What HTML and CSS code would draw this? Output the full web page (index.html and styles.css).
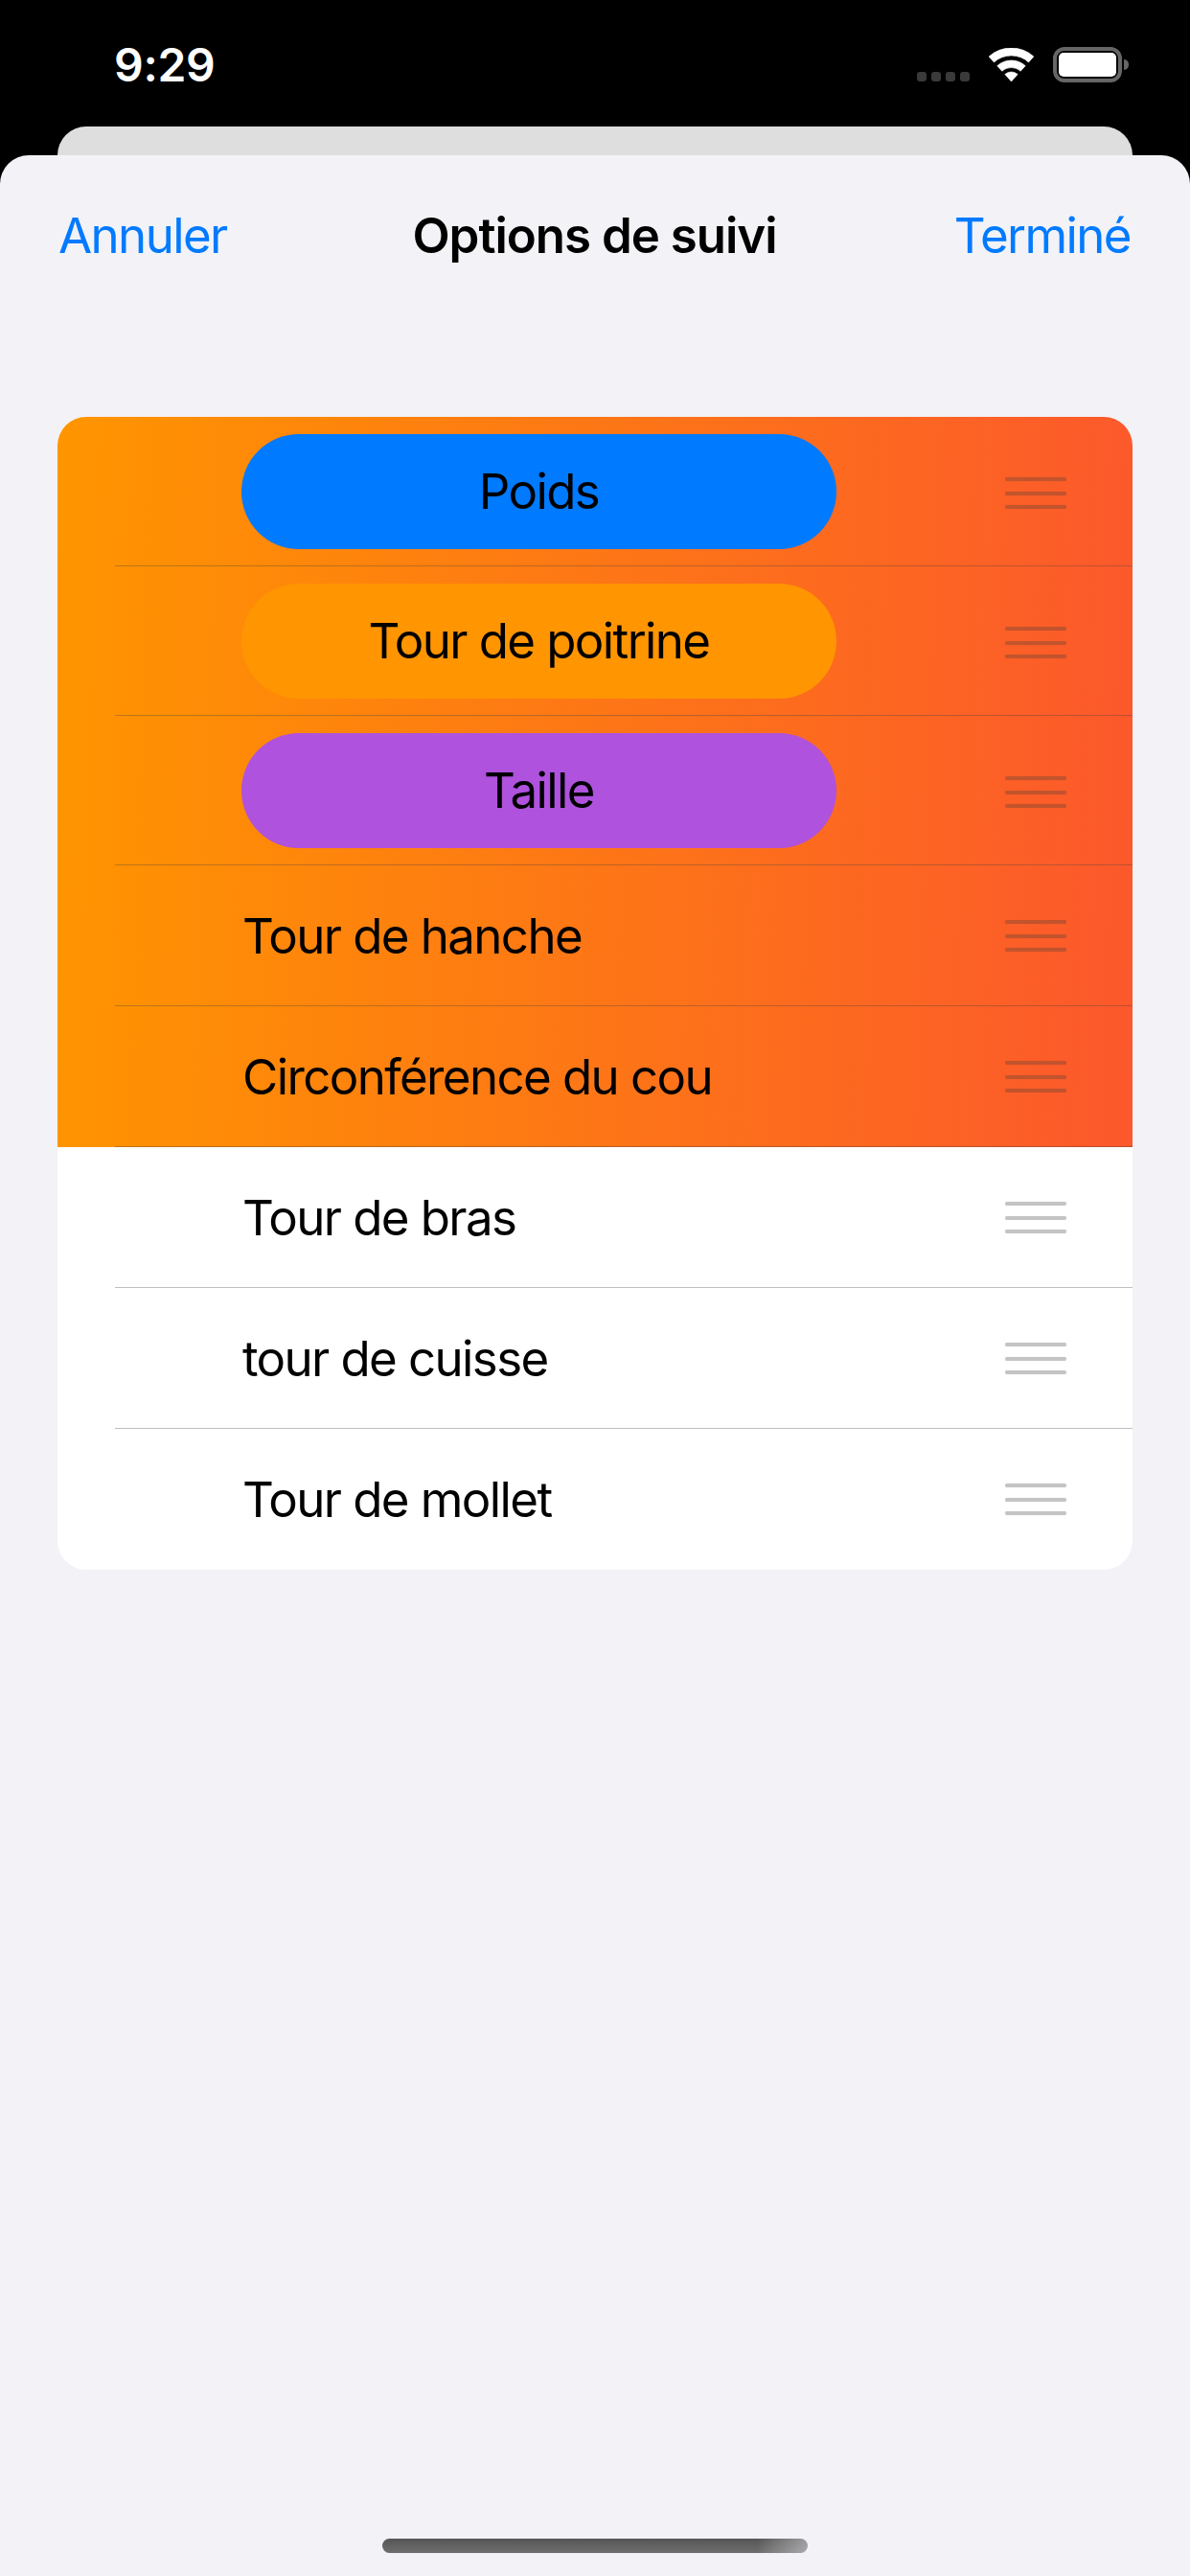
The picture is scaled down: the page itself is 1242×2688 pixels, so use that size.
FILE: index.html
```html
<!DOCTYPE html>
<html lang="fr">
<head>
<meta charset="utf-8">
<title>Options de suivi</title>
<link rel="stylesheet" href="styles.css">
</head>
<body>
<div class="status">
  <span class="time">9:29</span>
  <div class="status-right">
    <div class="cell"><i></i><i></i><i></i><i></i></div>
    <svg class="wifi" width="47" height="35" viewBox="0 0 47 35"><path d="M.1 9A35 35 0 0 1 46.900 9L41.570 14.940A27 27 0 0 0 5.430 14.940Z M8.780 18.650A22 22 0 0 1 38.220 18.650L33.200 24.220A14.500 14.500 0 0 0 13.800 24.220Z M16.810 27.570A10 10 0 0 1 30.190 27.570L23.500 35Z" fill="#fff" stroke="#fff" stroke-width=".6" stroke-linejoin="round"/></svg>
    <div class="battery"><div class="battery-body"><div class="battery-fill"></div></div><div class="battery-nub"></div></div>
  </div>
</div>
<div class="back-card"></div>
<main class="sheet">
  <header class="nav">
    <span class="nav-btn">Annuler</span>
    <h1 class="nav-title">Options de suivi</h1>
    <span class="nav-btn nav-btn-end">Terminé</span>
  </header>
  <section class="list">
    <div class="group-active">
      <div class="row row-pill"><div class="label-wrap"><span class="pill pill-blue">Poids</span></div><div class="grip"><i></i><i></i><i></i></div></div>
      <div class="row row-pill"><div class="label-wrap"><span class="pill pill-orange">Tour de poitrine</span></div><div class="grip"><i></i><i></i><i></i></div></div>
      <div class="row row-pill"><div class="label-wrap"><span class="pill pill-purple">Taille</span></div><div class="grip"><i></i><i></i><i></i></div></div>
      <div class="row"><div class="label-wrap"><span class="label">Tour de hanche</span></div><div class="grip"><i></i><i></i><i></i></div></div>
      <div class="row"><div class="label-wrap"><span class="label">Circonférence du cou</span></div><div class="grip"><i></i><i></i><i></i></div></div>
    </div>
    <div class="row"><div class="label-wrap"><span class="label">Tour de bras</span></div><div class="grip"><i></i><i></i><i></i></div></div>
    <div class="row"><div class="label-wrap"><span class="label">tour de cuisse</span></div><div class="grip"><i></i><i></i><i></i></div></div>
    <div class="row row-last"><div class="label-wrap"><span class="label">Tour de mollet</span></div><div class="grip"><i></i><i></i><i></i></div></div>
  </section>
  <div class="home"></div>
</main>
</body>
</html>
```
FILE: styles.css
```css
* { box-sizing: border-box; }
html, body { margin: 0; padding: 0; }
body {
  width: 1242px;
  height: 2688px;
  overflow: hidden;
  background: #000;
  font-family: Inter, "Liberation Sans", sans-serif;
  display: flex;
  flex-direction: column;
}
.status {
  height: 132px;
  flex: none;
  display: flex;
  justify-content: space-between;
  align-items: flex-start;
  padding: 49px 64px 0 119px;
}
.time {
  color: #fff;
  font-size: 48px;
  font-weight: 600;
  line-height: 37px;
  letter-spacing: -0.3px;
}
.status-right { display: flex; align-items: flex-start; }
.cell { display: flex; gap: 5px; margin-top: 26px; margin-right: 20px; }
.cell i { display: block; width: 10px; height: 10px; border-radius: 3px; background: #3a3a3a; }
.wifi { display: block; margin-top: 1px; margin-right: 20px; }
.battery { display: flex; align-items: center; }
.battery-body {
  width: 72px;
  height: 37px;
  border: 4px solid #666;
  border-radius: 12px;
  padding: 2px;
}
.battery-fill { width: 100%; height: 100%; background: #fff; border-radius: 5px; }
.battery-nub { width: 5px; height: 11px; margin-left: 2px; background: #666; border-radius: 0 6px 6px 0; }
.back-card {
  flex: none;
  height: 30px;
  margin: 0 60px;
  background: #dedede;
  border-radius: 30px 30px 0 0;
}
.sheet {
  flex: 1;
  display: flex;
  flex-direction: column;
  background: #f2f2f7;
  border-radius: 30px 30px 0 0;
}
.nav {
  height: 168px;
  flex: none;
  display: grid;
  grid-template-columns: 1fr auto 1fr;
  align-items: center;
  padding: 0 62px 0 61px;
}
.nav-btn { color: #007aff; font-size: 51px; line-height: 60px; letter-spacing: -1.6px; }
.nav-btn-end { text-align: right; }
.nav-title { margin: 0; font-size: 51px; line-height: 60px; font-weight: 600; color: #000; letter-spacing: -1px; }
.list {
  margin: 105px 60px 0;
  background: #fff;
  border-radius: 30px;
  overflow: hidden;
}
.group-active { background: linear-gradient(92deg, #ff9500 0%, #fc582c 100%); }
.row {
  position: relative;
  height: 147px;
  display: flex;
  align-items: center;
  justify-content: space-between;
  padding: 0 69px 0 193px;
  color: #000;
  font-size: 51px;
}
.row::after {
  content: "";
  position: absolute;
  left: 60px;
  right: 0;
  bottom: 0;
  height: 1px;
  background: rgba(60, 60, 67, 0.33);
}
.row-last::after { display: none; }
.row-pill { height: 156px; padding-left: 192px; }
.label-wrap { display: flex; }
.label { letter-spacing: -1.6px; line-height: 60px; }
.pill {
  width: 621px;
  height: 120px;
  border-radius: 60px;
  padding-bottom: 2px;
  display: flex;
  align-items: center;
  justify-content: center;
  letter-spacing: -1.6px;
}
.pill-blue { background: #007aff; }
.pill-orange { background: #ff9500; }
.pill-purple { background: #af52de; }
.grip { width: 64px; display: flex; flex-direction: column; gap: 10.5px; }
.grip i {
  display: block;
  height: 4px;
  border-radius: 2px;
  background: rgba(60, 60, 60, 0.3);
  box-shadow: 0 0 1px rgba(60, 60, 60, 0.2);
}
.row-pill .grip { margin-top: 3px; }
.home {
  margin: auto auto 24px;
  width: 444px;
  height: 15px;
  border-radius: 8px;
  background: linear-gradient(90deg, rgba(242,242,247,0) 88%, rgba(242,242,247,0.45) 100%), linear-gradient(180deg, #555 0%, #6e6e6e 100%);
}
```
